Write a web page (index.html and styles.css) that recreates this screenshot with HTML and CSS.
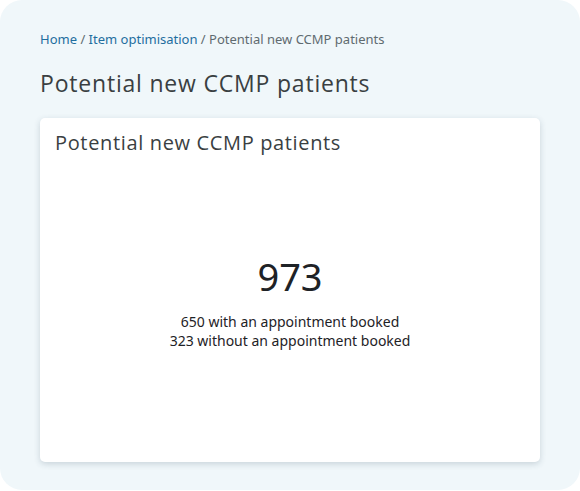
FILE: index.html
```html
<!DOCTYPE html>
<html>
<head>
<meta charset="utf-8">
<link rel="stylesheet" href="styles.css">
</head>
<body>
<div class="page">
  <nav class="crumbs"><a href="#">Home</a> / <a href="#">Item optimisation</a> / <span class="current">Potential new CCMP patients</span></nav>
  <h1 class="title">Potential new CCMP patients</h1>
  <section class="card">
    <h2 class="card-title">Potential new CCMP patients</h2>
    <div class="stat">
      <div class="stat-num">973</div>
      <div class="stat-line">650 with an appointment booked</div>
      <div class="stat-line">323 without an appointment booked</div>
    </div>
  </section>
</div>
</body>
</html>
```
FILE: styles.css
```css
html, body { margin: 0; padding: 0; background: #ffffff; }
.page {
  width: 580px;
  height: 490px;
  box-sizing: border-box;
  background: #f0f7fa;
  border-radius: 22px;
  padding: 30px 40px 0 40px;
  font-family: "Noto Sans", sans-serif;
}
.crumbs { font-size: 13px; line-height: 18px; color: #5f6b70; }
.crumbs a { color: #1f6e9f; text-decoration: none; }
.title {
  margin: 20px 0 0 0;
  font-family: "Open Sans", sans-serif;
  font-weight: 400;
  font-size: 23px;
  line-height: 31px;
  letter-spacing: 0.8px;
  color: #3a3f42;
}
.card {
  margin-top: 19px;
  background: #fff;
  border-radius: 5px;
  height: 344px;
  box-sizing: border-box;
  padding: 12px 15px;
  box-shadow: 0 2px 6px rgba(40, 70, 90, 0.2);
  display: flex;
  flex-direction: column;
}
.card-title {
  margin: 0;
  font-family: "Open Sans", sans-serif;
  font-weight: 400;
  font-size: 20px;
  line-height: 26px;
  letter-spacing: 0.65px;
  color: #3a3f42;
}
.stat { text-align: center; color: #1e2226; margin-top: 96px; }
.stat-num { font-size: 38px; line-height: 48px; margin-bottom: 12px; }
.stat-line { font-size: 14px; line-height: 19px; }
```
